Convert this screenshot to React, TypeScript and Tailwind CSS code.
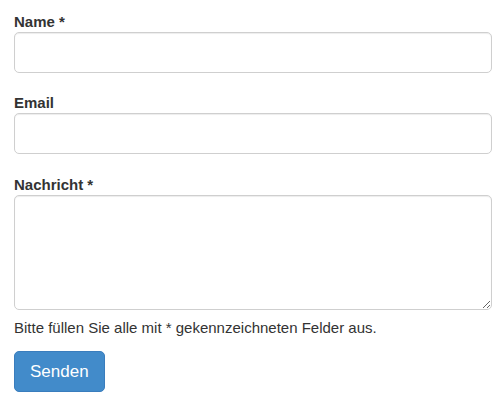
export default function App() {
  return (
    <div className="min-h-screen bg-white pl-[14px] pr-[8px] pt-[12px] font-['Liberation_Sans',Arial,sans-serif] text-[15px] text-[#333]">
      <form className="flex flex-col">
        <label className="block font-bold leading-[20px]">Name *</label>
        <input
          type="text"
          className="h-[41px] w-full rounded-[5px] border border-[#cfcfcf] px-3 shadow-[inset_0_1px_1px_rgba(0,0,0,0.075)] outline-none"
        />

        <label className="mt-[20px] block font-bold leading-[20px]">Email</label>
        <input
          type="email"
          className="h-[41px] w-full rounded-[5px] border border-[#cfcfcf] px-3 shadow-[inset_0_1px_1px_rgba(0,0,0,0.075)] outline-none"
        />

        <label className="mt-[21px] block font-bold leading-[20px]">Nachricht *</label>
        <textarea className="h-[115px] w-full resize-y rounded-[5px] border border-[#cfcfcf] px-3 py-2 shadow-[inset_0_1px_1px_rgba(0,0,0,0.075)] outline-none" />

        <p className="mt-[8px] leading-[20px]">
          Bitte füllen Sie alle mit * gekennzeichneten Felder aus.
        </p>

        <div className="mt-[13px]">
          <button
            type="button"
            className="flex h-[41px] items-center rounded-[5px] border border-[#3a7dbd] bg-[#428bca] px-[15px] text-[17px] text-white"
          >
            Senden
          </button>
        </div>
      </form>
    </div>
  );
}
